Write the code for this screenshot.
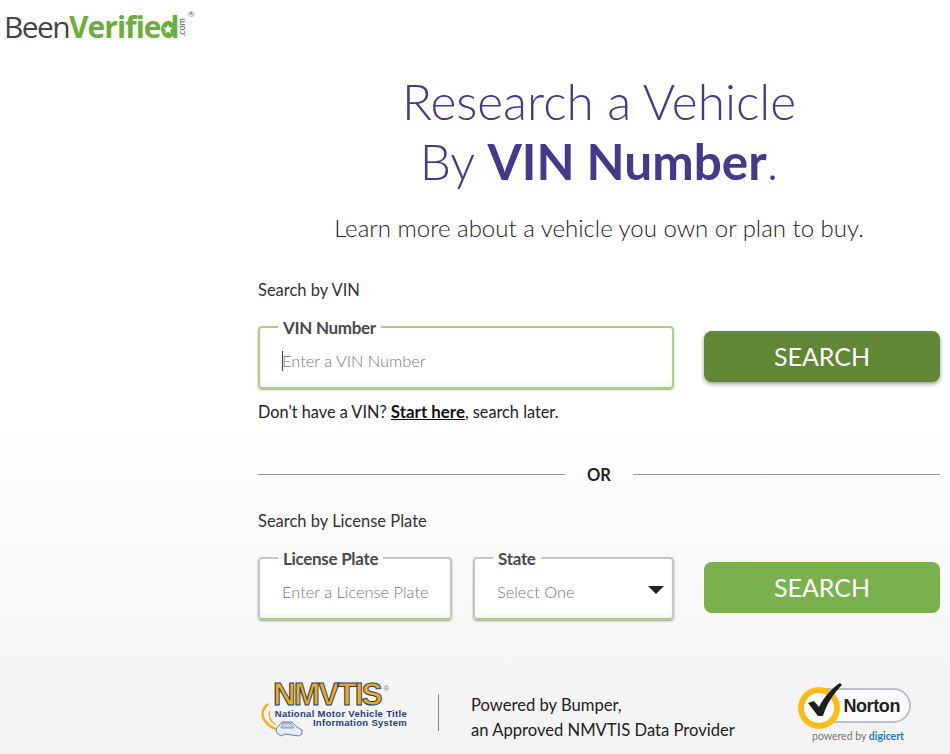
<div class="page">
  <header class="logo" aria-label="BeenVerified.com">
    <svg class="star" viewBox="0 0 14 14" aria-hidden="true"><circle cx="7" cy="7" r="7" fill="#6aaf3d"/><path d="M7 2.2 8.3 5.5 11.8 5.7 9.1 8 10 11.4 7 9.5 4 11.4 4.9 8 2.2 5.7 5.7 5.5Z" fill="#fff"/></svg>
    <span class="been">Been</span><span class="verified">Verified</span>
    <span class="dotcom">.com</span>
    <span class="reg">®</span>
  </header>

  <main class="main">
    <h1>Research a Vehicle<br />By <strong>VIN Number</strong>.</h1>
    <p class="lead">Learn more about a vehicle you own or plan to buy.</p>

    <p class="label first">Search by VIN</p>
    <div class="row vin-row">
      <fieldset class="field vin">
        <legend>VIN Number</legend>
        <span class="caret"></span>
        <span class="ph">Enter a VIN Number</span>
      </fieldset>
      <button class="search dark">SEARCH</button>
    </div>
    <p class="hint">Don't have a VIN? <a href="#start">Start here</a>, search later.</p>

    <div class="or"><span class="line"></span><b>OR</b><span class="line"></span></div>

    <p class="label plate-label">Search by License Plate</p>
    <div class="row plate-row">
      <fieldset class="field plate">
        <legend>License Plate</legend>
        <span class="ph">Enter a License Plate</span>
      </fieldset>
      <fieldset class="field state">
        <legend>State</legend>
        <span class="ph">Select One</span>
        <span class="arrow"></span>
      </fieldset>
      <button class="search light">SEARCH</button>
    </div>

    <footer class="foot">
      <div class="nmvtis">
        <svg class="swoosh" viewBox="0 0 44 44" aria-hidden="true">
          <path d="M9 3C3 8 2 15 6 20c3 4 7 7 11 8" fill="none" stroke="#efb21a" stroke-width="2.4"/>
          <path d="M11 10c-2 5 0 10 6 14" fill="none" stroke="#efb21a" stroke-width="1.4"/>
          <path d="M17 28l6-7h10l5 5 5 3v4l-3 2-7-1-7-1-4 2-4-3Z" fill="#e8edf6" stroke="#5d7fae" stroke-width="1"/>
          <path d="M24 22l-2 5h13l-3-5Z" fill="#c4d2e6" stroke="#5d7fae" stroke-width=".7"/>
        </svg>
        <div class="nm-title">NMVTIS<sup>®</sup></div>
        <div class="nm-sub">National Motor Vehicle Title<br />Information System</div>
      </div>
      <span class="divider"></span>
      <p class="powered">Powered by Bumper,<br />an Approved NMVTIS Data Provider</p>
      <div class="norton">
        <div class="pill">
          <svg class="seal" viewBox="0 0 46 46" aria-hidden="true">
            <circle cx="21" cy="25" r="18" fill="#fff" stroke="#fdbb13" stroke-width="6"/>
            <path d="M10 20l6-2 5 6C26 14 34 5 42 0l2 2C36 10 29 20 25 33h-5Z" fill="#1f1f1f"/>
          </svg>
          <span class="nname">Norton</span>
        </div>
        <div class="pby">powered by <b>digicert</b></div>
      </div>
    </footer>
  </main>
</div>

<style>
  :global(body) { margin: 0; }
  .page {
    width: 950px;
    height: 754px;
    overflow: hidden;
    box-sizing: border-box;
    background: linear-gradient(#fff 0, #fff 420px, #f2f2f2 754px);
    font-family: Lato, "Liberation Sans", sans-serif;
    color: #222;
  }
  .logo {
    position: relative;
    display: flex;
    align-items: baseline;
    height: 55px;
    margin-left: 4px;
    font-family: "Open Sans", "Liberation Sans", sans-serif;
    font-size: 30px;
    letter-spacing: -1.6px;
    line-height: 54px;
  }
  .been { color: #444; font-weight: 400; position: relative; }
  .verified { color: #6aaf3d; font-weight: 700; letter-spacing: -1px; position: relative; }
  .dotcom {
    position: absolute;
    left: 173px;
    top: 18px;
    writing-mode: vertical-rl;
    transform: rotate(180deg);
    font: 400 9px/9px Lato, sans-serif;
    letter-spacing: 0;
    color: #555;
  }
  .reg {
    position: absolute;
    left: 184px;
    top: 10px;
    font: 400 8px/8px Lato, sans-serif;
    letter-spacing: 0;
    color: #666;
  }
  .star { position: absolute; left: 157px; top: 22px; width: 14px; height: 14px; z-index: 1; }
  .main { margin-left: 258px; width: 682px; }
  h1 {
    margin: 16px 0 0;
    text-align: center;
    font-size: 49.5px;
    line-height: 60px;
    font-weight: 300;
    color: #44398b;
  }
  h1 strong { font-weight: 700; }
  .lead {
    margin: 21px 0 0;
    text-align: center;
    font-size: 24px;
    line-height: 32px;
    font-weight: 300;
    color: #222;
  }
  .label { margin: 0; font-size: 16.5px; line-height: 20px; color: #333; }
  .first { margin-top: 36px; }
  .row { display: flex; align-items: flex-start; }
  .vin-row { margin-top: 18px; }
  .field {
    position: relative;
    box-sizing: border-box;
    margin: 0;
    min-width: 0;
    border: 2px solid #a9cf85;
    border-radius: 4px;
    background: #fff;
    box-shadow: 0 1px 2px rgba(0, 0, 0, .35), inset 0 -3px 4px rgba(122, 177, 77, .12);
    display: flex;
    align-items: center;
  }
  legend {
    position: relative;
    top: 1px;
    margin-left: -4px;
    padding: 0 5px;
    font-size: 17px;
    line-height: 18px;
    font-weight: 700;
    color: #4a4a4a;
    letter-spacing: -.3px;
  }
  .ph { font-size: 16.4px; font-weight: 300; color: #777; white-space: nowrap; }
  .vin { width: 416px; height: 71px; padding: 0 22px 3px; }
  .caret { position: absolute; left: 22px; top: 15px; width: 1px; height: 20px; background: #444; }
  .search {
    border: 0;
    border-radius: 8px;
    color: #fff;
    font: 400 25px/1 Lato, sans-serif;
    width: 236px;
    height: 51px;
    padding: 0;
  }
  .dark { background: #5f8736; margin: 13px 0 0 30px; box-shadow: 0 2px 4px rgba(0, 0, 0, .4); }
  .light { background: #7ab14d; margin: 13px 0 0 30px; }
  .hint { margin: 13px 0 0; font-size: 16.3px; line-height: 20px; color: #222; }
  .hint a { color: #111; font-size: 16.9px; font-weight: 700; text-decoration: underline; }
  .or { display: flex; align-items: center; height: 40px; margin-top: 32px; }
  .or b { width: 68px; text-align: center; font-size: 16.5px; font-weight: 700; color: #222; position: relative; top: 1px; }
  .or .line { flex: 1; height: 1px; background: #999; }
  .plate-label { margin-top: 17px; }
  .plate-row { margin-top: 18px; }
  .plate-row .field { border-color: #c4c9bf; border-bottom-color: #a9cf85; height: 71px; margin-top: 0; }
  .plate { width: 194px; padding: 0 22px 3px; }
  .state { width: 201px; margin-left: 21px !important; padding: 0 22px 3px; }
  .arrow {
    position: absolute;
    right: 8px;
    top: 19px;
    width: 0;
    height: 0;
    border-left: 8px solid transparent;
    border-right: 8px solid transparent;
    border-top: 8px solid #222;
  }
  .foot { display: flex; align-items: center; margin-top: 67px; height: 62px; }
  .nmvtis { position: relative; width: 180px; height: 62px; flex: none; }
  .swoosh { position: absolute; left: 1px; top: 14px; width: 44px; height: 44px; }
  .nm-title {
    position: absolute;
    left: 15px;
    top: -4px;
    font: 700 31.5px/23px "Liberation Sans", sans-serif;
    color: #f0ab0f;
    -webkit-text-stroke: 1px #1f3f7a;
    letter-spacing: -1.9px;
    white-space: nowrap;
  }
  .nm-sub {
    position: absolute;
    left: 12px;
    right: 31px;
    top: 22px;
    font: 700 9.5px/9px "Liberation Sans", sans-serif;
    color: #1f3f7a;
    text-align: right;
    letter-spacing: .3px;
    white-space: nowrap;
  }
  .nm-title sup { font-size: 8px; line-height: 0; vertical-align: 14px; -webkit-text-stroke: 0; color: #777; font-weight: 400; letter-spacing: 0; margin-left: 3px; }
  .divider { width: 1px; height: 37px; background: #888; flex: none; margin-bottom: 12px; }
  .powered { margin: 0 0 0 32px; font-size: 16.6px; line-height: 25px; color: #222; width: 290px; flex: none; }
  .norton { margin-left: 39px; width: 111px; flex: none; align-self: flex-start; margin-top: 1px; }
  .pill {
    position: relative;
    width: 111px;
    height: 35px;
    box-sizing: border-box;
    border: 2px solid #b9c0cc;
    border-radius: 18px;
    display: flex;
    align-items: center;
    justify-content: flex-end;
    padding-right: 9px;
    background: #fbfbfb;
  }
  .seal { position: absolute; left: -4px; top: -7px; width: 46px; height: 46px; overflow: visible; }
  .nname { font: 700 18px/1 "Liberation Sans", sans-serif; letter-spacing: -.4px; color: #222; }
  .pby { margin: 7px 0 0 12px; font-size: 10.5px; line-height: 12px; color: #777; white-space: nowrap; }
  .pby b { color: #1b7fc1; }
</style>
